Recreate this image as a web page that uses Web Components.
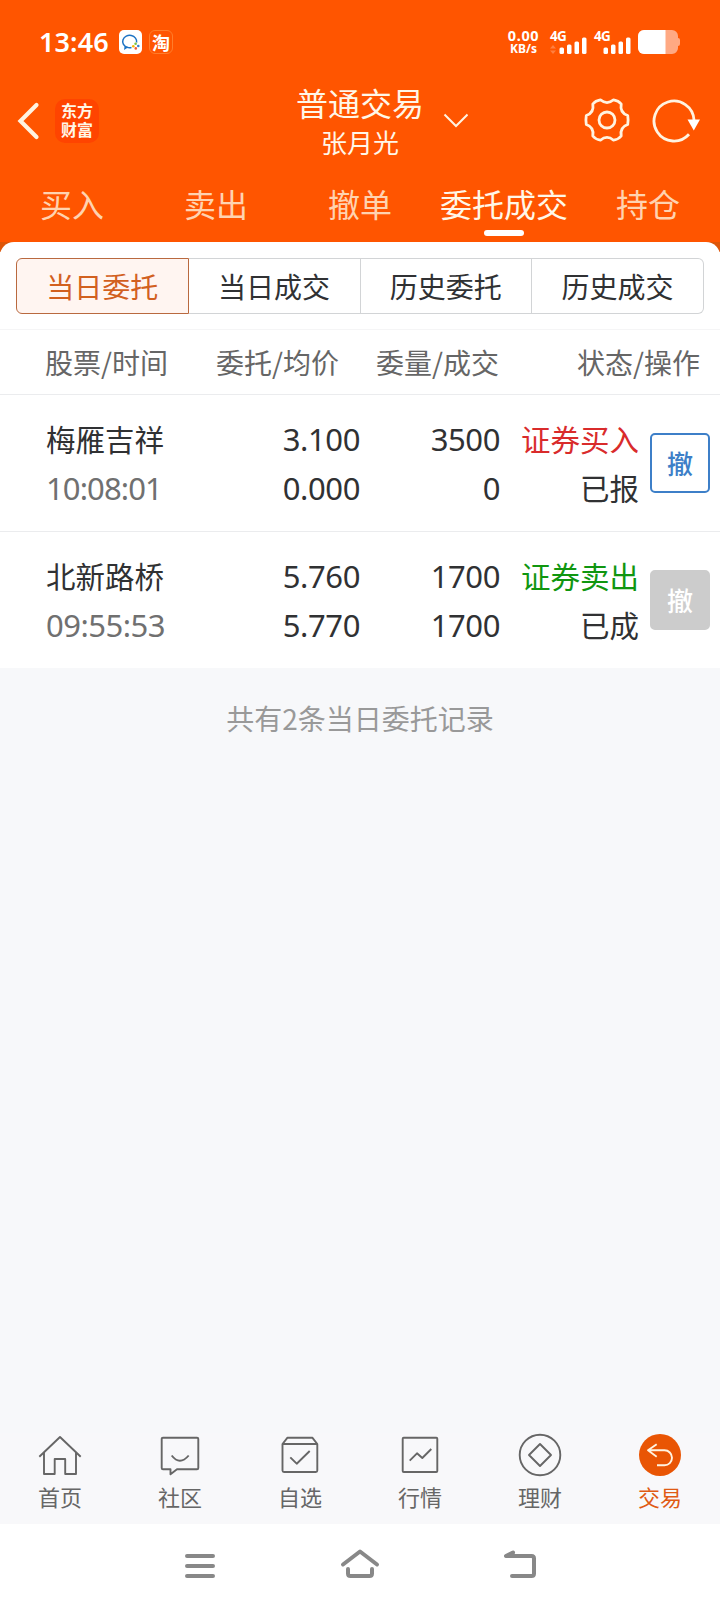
<!DOCTYPE html>
<html lang="zh-CN">
<head>
<meta charset="UTF-8">
<meta name="viewport" content="width=device-width, initial-scale=1">
<title>普通交易</title>
<style>
body {
    margin: 0;
    background: #f8f8fa;
    color: #303133;
    font-family: "Noto Sans CJK SC", "Noto Sans", sans-serif;
}
</style>
</head>
<body>
<trade-app></trade-app>

<script>
// Small helper: every element gets an open shadow root with its own markup
class BaseElement extends HTMLElement {
    constructor() {
        super();
        const template = document.createElement('template');
        template.innerHTML = this.constructor.markup;
        this.attachShadow({ mode: 'open' });
        this.shadowRoot.appendChild(template.content.cloneNode(true));
    }
}

class StatusBar extends BaseElement {
    static markup = `
<style>
:host {
    display: flex;
    justify-content: space-between;
    align-items: center;
    box-sizing: border-box;
    height: 82px;
    padding: 2px 40px 0 39px;
    color: #fff;
    font-family: "Noto Sans", "Noto Sans CJK SC", sans-serif;
}
.side { display: flex; align-items: center; }
.time { font-size: 27px; font-weight: 600; line-height: 30px; width: 80px; letter-spacing: 0.1px; }
.app { display: flex; width: 23px; height: 24px; }
.tao {
    box-sizing: border-box;
    width: 24px;
    margin-left: 7px;
    border: 1px solid #ff7d2b;
    border-radius: 6px;
    justify-content: center;
    align-items: center;
    font: bold 18px/22px "Noto Sans CJK SC", sans-serif;
}
.speed { width: 35px; margin-right: 1px; text-align: center; font-weight: 700; white-space: nowrap; }
.speed div { font-size: 14.500px; line-height: 14px; letter-spacing: 0.6px; }
.speed div + div { font-size: 12px; letter-spacing: 0; }
svg { display: block; }
</style>
<div class="side">
    <div class="time">13:46</div>
    <div class="app">
        <svg width="23" height="24" viewBox="0 0 23 24">
            <rect width="23" height="24" rx="5" fill="#fff"/>
            <path d="M17.600 12.500A7 6.200 0 1 0 8 17.300L6 18.600 6.300 16.400" fill="none" stroke="#1c73c4" stroke-width="1.500"/>
            <path d="M8 17.400q2 .7 4.500.2" fill="none" stroke="#1c73c4" stroke-width="1.500"/>
            <circle cx="16.600" cy="13.800" r="1.300" fill="#7cc243"/>
            <circle cx="19.300" cy="16" r="1.300" fill="#2f7fd0"/>
            <circle cx="14.300" cy="16.200" r="1.300" fill="#f7b500"/>
            <circle cx="16.800" cy="18.400" r="1.300" fill="#ef5a3c"/>
        </svg>
    </div>
    <div class="app tao">淘</div>
</div>
<div class="side">
    <div class="speed"><div>0.00</div><div>KB/s</div></div>
    <svg width="138" height="40" viewBox="0 -8 138 40" fill="#fff">
        <g font-size="13.500" font-weight="700" letter-spacing="-0.600">
            <text x="8" y="10.500">4G</text>
            <text x="52" y="10.500">4G</text>
        </g>
        <path d="M8 18.500l3-3.500 3 3.500zM8 20.500l3 3.500 3-3.500z" opacity=".25"/>
        <g id="bars">
            <rect x="17.500" y="17.500" width="4.500" height="6.500" rx="1.500"/>
            <rect x="25" y="14.500" width="4.500" height="9.500" rx="1.500"/>
            <rect x="32.500" y="11.500" width="4.500" height="12.500" rx="1.500"/>
            <rect x="40" y="7.500" width="4.500" height="16.500" rx="1.500"/>
        </g>
        <use href="#bars" x="44"/>
        <path d="M102 0h28a6 6 0 0 1 6 6v2q2 0 2 2v4q0 2-2 2v2a6 6 0 0 1-6 6h-28a6 6 0 0 1-6-6v-12a6 6 0 0 1 6-6z" fill="#ffa983"/>
        <path d="M102 0h21.500v24h-21.500a6 6 0 0 1-6-6v-12a6 6 0 0 1 6-6z"/>
    </svg>
</div>
`;
}

class TitleBar extends BaseElement {
    static markup = `
<style>
:host {
    display: grid;
    grid-template-columns: 1fr auto 1fr;
    height: 80px;
    color: #fff7e8;
}
.side { display: flex; align-items: center; }
.logo {
    box-sizing: border-box;
    width: 44px;
    height: 44px;
    margin: -3px 0 0 13px;
    padding-top: 2px;
    border-radius: 10px;
    background: #ff4400;
    font-size: 16px;
    font-weight: 700;
    line-height: 19.500px;
    text-align: center;
}
.title { text-align: center; line-height: 40px; }
.name { font-size: 32px; }
.user { font-size: 26px; }
.back { margin-left: 17px; }
.chevron { margin-top: -8px; }
.tools { margin-left: auto; }
svg { display: block; fill: none; stroke: #fff3e0; }
</style>
<div class="side">
    <svg class="back" width="25" height="40" viewBox="0 0 25 40" stroke-width="4.200" stroke-linecap="round"><path d="M19.500 3L3.500 19 19.500 35"/></svg>
    <div class="logo">东方<br>财富</div>
</div>
<div class="title">
    <div class="name"><slot></slot></div>
    <div class="user"><slot name="user"></slot></div>
</div>
<div class="side">
    <svg class="chevron" width="44" height="20" viewBox="0 0 44 20" stroke-width="2"><path d="M20.500 6.500L32 18 43.500 6.500"/></svg>
    <svg class="tools" width="140" height="48" viewBox="0 0 140 48" stroke-width="2.800">
        <g transform="translate(27 22)" stroke-linejoin="round">
            <path d="M20.700 4.500Q12.600 7.300 14.200 16 Q11.500 19.400 6.600 20.200Q0 14.600-6.600 20.200 Q-11.500 19.400-14.200 16Q-12.600 7.300-20.700 4.500 Q-21.500 0-20.700-4.500Q-12.600-7.300-14.200-16 Q-11.500-19.400-6.600-20.200Q0-14.600 6.600-20.200 Q11.500-19.400 14.200-16Q12.600-7.300 20.700-4.500 Q21.500 0 20.700 4.500Z"/>
            <circle r="8"/>
        </g>
        <path d="M114 22A20 20 0 1 0 109 36.300"/>
        <path d="M107.500 21.500h12.500l-6.200 11z" fill="#fff" stroke="none"/>
    </svg>
</div>
`;
}

class MainTabs extends BaseElement {
    static markup = `
<style>
:host { display: grid; grid-template-columns: repeat(5, 1fr); height: 80px; }
::slotted(*) {
    padding-top: 22px;
    font-size: 32px;
    line-height: 39px;
    text-align: center;
    color: #ffd3b0;
}
::slotted([active]) { color: #fff7e8; }
</style>
<slot></slot>
`;
}

class MainTab extends BaseElement {
    static markup = `
<style>
:host { display: block; }
i { display: none; width: 40px; height: 6px; margin: 7px auto 0; border-radius: 3px; background: #fff; }
:host([active]) i { display: block; }
</style>
<slot></slot><i></i>
`;
}

class SegmentControl extends BaseElement {
    static markup = `
<style>
:host { display: flex; height: 56px; }
::slotted(*) {
    flex: 1;
    box-sizing: border-box;
    border: 1px solid #d2d4d6;
    border-left-width: 0;
    font-size: 28px;
    line-height: 55px;
    text-align: center;
}
::slotted(:last-child) { border-radius: 0 6px 6px 0; }
::slotted([active]) {
    border: 1px solid #b9693f;
    border-radius: 6px 0 0 6px;
    background: #fff5f1;
    color: #d2601f;
}
</style>
<slot></slot>
`;
}

class OrderHead extends BaseElement {
    static markup = `
<style>
:host {
    display: grid;
    grid-template-columns: 160px 134px 160px 1fr;
    box-sizing: border-box;
    height: 66px;
    padding: 0 20px 0 45px;
    border: solid #ebecee;
    border-width: 1px 0;
    border-top-color: #f5f5f6;
    font-size: 28px;
    line-height: 65px;
    color: #666;
    text-align: right;
}
.stock { text-align: left; }
</style>
<span class="stock">股票/时间</span><span>委托/均价</span><span>委量/成交</span><span>状态/操作</span>
`;
}

class OrderRow extends BaseElement {
    static markup = `
<style>
:host {
    display: grid;
    grid-template-columns: 170px 144px 140px 140px 60px;
    align-items: center;
    height: 136px;
    padding: 0 10px 0 46px;
    font-size: 29.500px;
    line-height: 49px;
    text-align: right;
    background: #fff;
}
:host(:not(:last-of-type)) { border-bottom: 1px solid #ebecee; }
.stock { text-align: left; }
.num, .time { font-family: "Noto Sans", sans-serif; font-size: 31px; letter-spacing: -0.4px; }
.num { padding-top: 2px; }
.time { position: relative; top: 1px; color: #707070; letter-spacing: var(--time-track, -0.500px); }
.side { color: #d92b2b; }
:host([side="sell"]) .side { color: #109610; }
.status { padding-right: 1px; }
button {
    box-sizing: border-box;
    width: 60px;
    height: 60px;
    margin-left: 10px;
    padding: 0;
    border: 2px solid #3d7fc8;
    border-radius: 5px;
    background: #fff;
    font: 500 26px/56px "Noto Sans CJK SC", sans-serif;
    color: #3d7fc8;
}
button:disabled { border-color: #ccc; background: #ccc; color: #fff; }
</style>
<div class="stock"><div><slot></slot></div><div class="time"></div></div>
<div class="num"><div class="price"></div><div class="average"></div></div>
<div class="num"><div class="amount"></div><div class="filled"></div></div>
<div class="status"><div class="side"></div><div class="state"></div></div>
<button>撤</button>
`;

    connectedCallback() {
        for (const name of ['time', 'price', 'average', 'amount', 'filled', 'state']) {
            this.shadowRoot.querySelector('.' + name).textContent = this.getAttribute(name);
        }
        const sell = this.getAttribute('side') === 'sell';
        this.shadowRoot.querySelector('.side').textContent = sell ? '证券卖出' : '证券买入';
        this.shadowRoot.querySelector('button').disabled = this.hasAttribute('done');
    }
}

const icons = {
    home: '<path d="M1.300 23.700L22 4 42.700 23.700M6 19.500V41H16.700V26H27.200V41H38V19.500"/>',
    chat: '<path d="M5 4.700H39q1.300 0 1.300 1.300V35q0 1.300-1.300 1.300H19L12.500 41.300V36.300H5q-1.300 0-1.300-1.300V6q0-1.300 1.300-1.300zM13.700 22.500q8 10.500 17 0"/>',
    box: '<path d="M4.500 11L9.500 4.700H34.300L39.300 11zM4.500 11V37.500q0 1.500 1.500 1.500H37.800q1.500 0 1.500-1.500V11M12.300 24.300L18.700 30.700 31.700 18"/>',
    chart: '<rect x="4.700" y="4.700" width="34.600" height="34.300" rx="1"/><path d="M11.700 27.700L19 20.300 24.300 25 33.300 16"/>',
    wealth: '<circle cx="22" cy="22" r="20.300"/><path d="M22 11L33 22 22 33 11 22z"/>',
    trade: '<circle cx="22" cy="22" r="21" fill="#e95504" stroke="none"/><path d="M18.700 11.300L10 17.300 18.700 23.700M10 17.300H26.500a7.500 7.500 0 0 1 0 15H19" stroke="#fff3e0"/>'
};

class NavItem extends BaseElement {
    static markup = `
<style>
:host { display: flex; flex-direction: column; align-items: center; flex: 1; font-size: 22px; line-height: 24px; color: #666; }
:host([active]) { color: #e05a14; }
svg { margin-bottom: 7px; fill: none; stroke: #666; stroke-width: 1.900; stroke-linejoin: round; }
</style>
<svg width="44" height="44" viewBox="0 0 44 44"></svg>
<span><slot></slot></span>
`;

    connectedCallback() {
        this.shadowRoot.querySelector('svg').innerHTML = icons[this.getAttribute('icon')];
    }
}

class SystemNav extends BaseElement {
    static markup = `
<style>
:host { display: flex; justify-content: center; align-items: center; gap: 116px; height: 84px; background: #fff; }
svg { fill: none; stroke: #888; stroke-width: 4; stroke-linecap: round; stroke-linejoin: round; }
</style>
<svg width="44" height="44" viewBox="0 0 44 44"><path d="M9 12H35M9 22H35M9 32H35"/></svg>
<svg width="44" height="44" viewBox="0 0 44 44"><path d="M5 20.500L22 7.500 39 20.500M10 25V29.500q0 2.500 2.500 2.500H31.500q2.500 0 2.500-2.500V25"/></svg>
<svg width="44" height="44" viewBox="0 0 44 44"><path d="M15 8.500L8 12H33.500q2.500 0 2.500 2.500V29.500q0 2.500-2.500 2.500H14"/></svg>
`;
}

class TradeApp extends BaseElement {
    static markup = `
<style>
:host { display: flex; flex-direction: column; height: 1608px; }
header { background: #ff5500; }
main { flex: 1; background: linear-gradient(#dd5508 10px, #f7f8fa 10px); }
.panel { padding: 16px 16px 15px; border-radius: 14px 14px 0 0; background: #fff; }
order-head { background: #fff; }
.summary { margin: 30px 0 0; font-size: 28px; line-height: 40px; text-align: center; color: #999; }
nav { display: flex; padding-bottom: 16px; }
</style>
<header>
    <status-bar></status-bar>
    <title-bar>普通交易<span slot="user">张月光</span></title-bar>
    <main-tabs>
        <main-tab>买入</main-tab>
        <main-tab>卖出</main-tab>
        <main-tab>撤单</main-tab>
        <main-tab active>委托成交</main-tab>
        <main-tab>持仓</main-tab>
    </main-tabs>
</header>
<main>
    <div class="panel">
        <segment-control>
            <span active>当日委托</span>
            <span>当日成交</span>
            <span>历史委托</span>
            <span>历史成交</span>
        </segment-control>
    </div>
    <order-head></order-head>
    <order-row time="10:08:01" price="3.100" average="0.000" amount="3500" filled="0" side="buy" state="已报" style="--time-track: -0.900px">梅雁吉祥</order-row>
    <order-row time="09:55:53" price="5.760" average="5.770" amount="1700" filled="1700" side="sell" state="已成" done>北新路桥</order-row>
    <p class="summary">共有2条当日委托记录</p>
</main>
<nav>
    <nav-item icon="home">首页</nav-item>
    <nav-item icon="chat">社区</nav-item>
    <nav-item icon="box">自选</nav-item>
    <nav-item icon="chart">行情</nav-item>
    <nav-item icon="wealth">理财</nav-item>
    <nav-item icon="trade" active>交易</nav-item>
</nav>
<system-nav></system-nav>
`;
}

// Children first, the app shell last
customElements.define('status-bar', StatusBar);
customElements.define('title-bar', TitleBar);
customElements.define('main-tabs', MainTabs);
customElements.define('main-tab', MainTab);
customElements.define('segment-control', SegmentControl);
customElements.define('order-head', OrderHead);
customElements.define('order-row', OrderRow);
customElements.define('nav-item', NavItem);
customElements.define('system-nav', SystemNav);
customElements.define('trade-app', TradeApp);
</script>
</body>
</html>
